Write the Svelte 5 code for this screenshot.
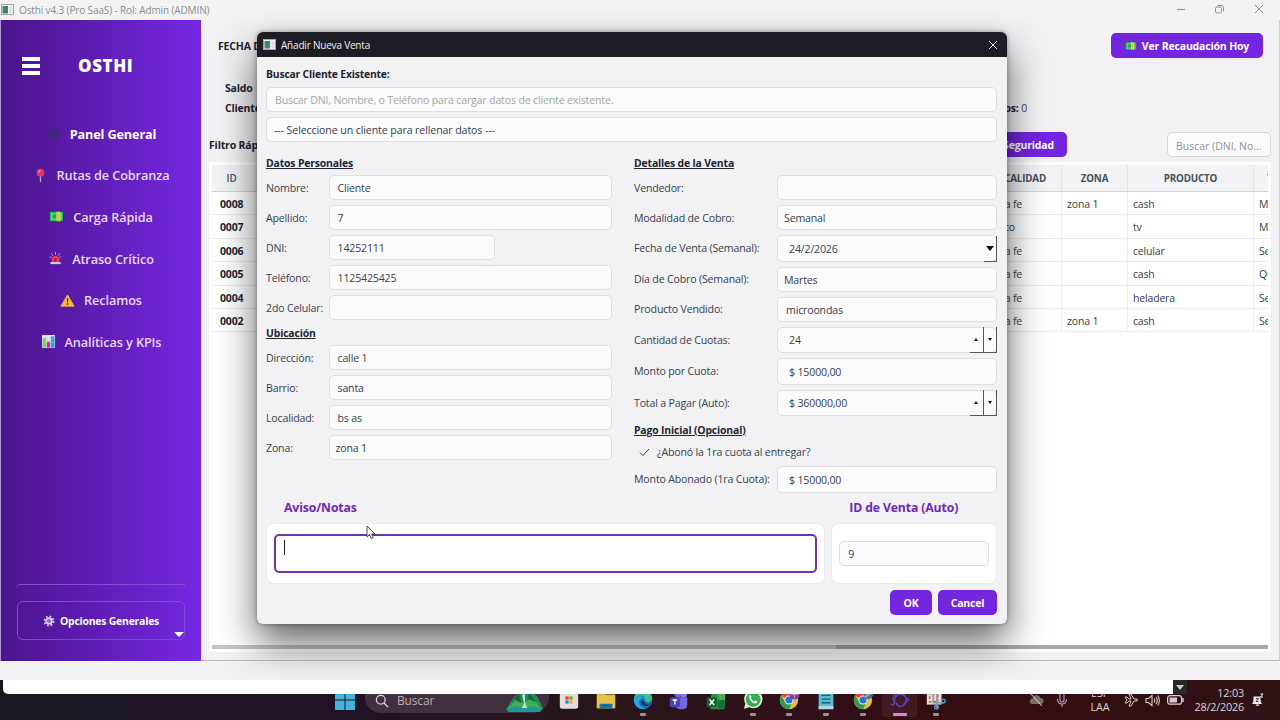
<script>
    const menu = [
        { icon: 'people', name: 'Panel General', active: true },
        { icon: 'pin', name: 'Rutas de Cobranza' },
        { icon: 'money', name: 'Carga Rápida' },
        { icon: 'siren', name: 'Atraso Crítico' },
        { icon: 'warn', name: 'Reclamos' },
        { icon: 'chart', name: 'Analíticas y KPIs' }
    ];

    const rows = [
        ['0008', 'a fe', 'zona 1', 'cash', 'Me'],
        ['0007', 'co', '', 'tv', 'Me'],
        ['0006', 'a fe', '', 'celular', 'Se'],
        ['0005', 'a fe', '', 'cash', 'Qu'],
        ['0004', 'a fe', '', 'heladera', 'Se'],
        ['0002', 'a fe', 'zona 1', 'cash', 'Se']
    ];

    const personal = [
        { label: 'Nombre:', value: 'Cliente' },
        { label: 'Apellido:', value: '7' },
        { label: 'DNI:', value: '14252111', type: 'short' },
        { label: 'Teléfono:', value: '1125425425' },
        { label: '2do Celular:', value: '' }
    ];

    const address = [
        { label: 'Dirección:', value: 'calle 1' },
        { label: 'Barrio:', value: 'santa' },
        { label: 'Localidad:', value: 'bs as' },
        { label: 'Zona:', value: 'zona 1', type: 'combo' }
    ];

    const sale = [
        { label: 'Vendedor:', value: '' },
        { label: 'Modalidad de Cobro:', value: 'Semanal', type: 'combo' },
        { label: 'Fecha de Venta (Semanal):', value: '24/2/2026', type: 'date' },
        { label: 'Día de Cobro (Semanal):', value: 'Martes', type: 'combo' },
        { label: 'Producto Vendido:', value: 'microondas' },
        { label: 'Cantidad de Cuotas:', value: '24', type: 'spin' },
        { label: 'Monto por Cuota:', value: '$ 15000,00', type: 'money' },
        { label: 'Total a Pagar (Auto):', value: '$ 360000,00', type: 'spin' }
    ];

    const apps = ['store', 'folder', 'edge', 'teams', 'excel', 'whatsapp', 'chrome', 'notes', 'chrome2', 'osthi', 'snip'];
    const running = ['edge', 'whatsapp', 'chrome', 'notes', 'chrome2', 'snip'];
</script>

{#snippet appIcon()}
    <svg class="app-icon" width="13" height="11" viewBox="0 0 13 11">
        <rect x=".5" y=".5" width="12" height="10" fill="#f4f7f6" stroke="#9da9a8" />
        <rect x="1.5" y="2" width="5.5" height="7.5" fill="#3c8474" />
        <rect x="8" y="2" width="3.5" height="7.5" fill="#d9e9e5" />
    </svg>
{/snippet}

{#snippet emoji(name)}
    <svg class="emoji" width="16" height="16" viewBox="0 0 16 16">
        {#if name == 'people'}
            <g fill="#3d2a78">
                <circle cx="5" cy="5.3" r="2.2" /><circle cx="11" cy="5.3" r="2.2" />
                <path d="M2 13V10q0-2 3-2t3 2q0-2 3-2t3 2v3H9v-2H7v2Z" />
            </g>
        {:else if name == 'pin'}
            <path d="M7.3 8h1.4v6.5l-.7 1-.7-1Z" fill="#b3a5cc" />
            <circle cx="8" cy="5" r="4.1" fill="#e5326a" />
            <circle cx="6.7" cy="3.7" r="1.3" fill="#f67697" />
        {:else if name == 'money'}
            <rect x="1" y="3" width="14" height="10" fill="#25b34d" />
            <rect x="2.2" y="4.2" width="11.6" height="7.6" fill="#5cd873" />
            <circle cx="6" cy="8" r="2.4" fill="#25a547" />
            <rect x="8" y="3" width="4" height="10" fill="#f6d74c" />
            <rect x="9.2" y="3" width="1" height="10" fill="#c8a72c" />
        {:else if name == 'siren'}
            <path d="M8 1v3M3.5 2.5 5.2 5M12.5 2.5 10.8 5M1.8 6l2 1M14.2 6l-2 1" stroke="#e8a0b5" stroke-width="1" />
            <path d="M4 12V9q0-3.8 4-3.8T12 9v3Z" fill="#f0375b" />
            <path d="M7 8h2v4H7Z" fill="#a91b50" />
            <path d="M2.5 14v-2.2h11V14Z" fill="#d7c6dc" />
        {:else if name == 'warn'}
            <path d="M8 2 15 14H1Z" fill="#f5b941" stroke="#f5b941" stroke-linejoin="round" />
            <path d="M7.2 5.5h1.6L8.5 10h-1ZM7.2 11h1.6v1.6H7.2Z" fill="#45321f" />
        {:else if name == 'chart'}
            <rect x="1" y="1" width="14" height="14" rx="1" fill="#e5e8f0" />
            <rect x="1.5" y="4" width="4" height="10.5" fill="#7cd36e" />
            <rect x="6.2" y="8" width="3.5" height="6.5" fill="#d42d68" />
            <rect x="10.4" y="2.5" width="4.1" height="12" fill="#349ce0" />
            <path d="M1 5h14M1 9h14" stroke="#c5cbe0" stroke-width=".5" />
        {:else if name == 'gear'}
            <circle cx="8" cy="8" r="3.7" fill="none" stroke="#d8cfec" stroke-width="2.8" />
            <circle cx="8" cy="8" r="6.2" fill="none" stroke="#d8cfec" stroke-width="2.2" stroke-dasharray="2.43 2.43" />
            <circle cx="8" cy="8" r="1.2" fill="#a996cd" />
        {/if}
    </svg>
{/snippet}

{#snippet task(name)}
    <svg width="24" height="24" viewBox="0 0 24 24">
        {#if name == 'store'}
            <path d="M8 5V2h8v3" fill="none" stroke="#4aa4dc" stroke-width="2" />
            <rect x="2" y="3" width="20" height="18.5" rx="2.5" fill="#e3dddd" />
            <path d="M8 8h3.6v3.6H8Z" fill="#df4930" /><path d="M12.4 8H16v3.6h-3.6Z" fill="#77a72d" />
            <path d="M8 12.4h3.6V16H8Z" fill="#2c88d2" /><path d="M12.4 12.4H16V16h-3.6Z" fill="#e8ad29" />
        {:else if name == 'folder'}
            <path d="M2 3h8l2 3h10v15H2Z" fill="#dcb43c" />
            <path d="M2 7h20v14H2Z" fill="#e4c14a" />
            <path d="M5 21v-4q0-1 1-1h12q1 0 1 1v4Z" fill="#1c75b8" /><path d="M8 18h8" stroke="#124d83" stroke-width="1.3" />
        {:else if name == 'edge'}
            <circle cx="12" cy="12" r="10" fill="#1570bd" />
            <path d="M2 12C2 5 7 2 12 2c6 0 10 4 10 8 0 3-3 5-6 4-3 0-2-2-2-4-1-4-9-4-12 2Z" fill="#3fbe8e" />
            <path d="M2 12c3-6 11-5 12-1-4-2-7 1-6 5 1 3 5 5 8 5-8 3-14-3-14-9Z" fill="#2aa5d5" />
            <path d="M10 15c0-2 2-3 3-2s0 4 7 4c-2 2-9 3-10-2Z" fill="#172f4e" />
        {:else if name == 'teams'}
            <circle cx="17" cy="6" r="3.5" fill="#8181ee" /><circle cx="11" cy="5" r="4" fill="#6d71e2" />
            <path d="M8 9h13v8q0 5-5 5h-3q-5 0-5-5Z" fill="#6f66e2" />
            <rect x="2" y="9" width="11" height="11" rx="2" fill="#4448ad" />
            <path d="M5 12h5M7.5 12v5" stroke="#fff" stroke-width="1.4" />
        {:else if name == 'excel'}
            <path d="M8 2h13v20H6V10Z" fill="#2b8e43" /><path d="M14 2h8v10h-8Z" fill="#4eae46" />
            <path d="M14 12h8v9h-8Z" fill="#187038" />
            <rect x="2" y="9" width="11" height="11" rx="2" fill="#126535" />
            <path d="m5 11.5 5 6m0-6-5 6" stroke="#fff" stroke-width="1.5" />
        {:else if name == 'whatsapp'}
            <path d="M2 21.5 3.7 16A10 10 0 1 1 8 20Z" fill="#dceadd" />
            <circle cx="12.2" cy="11.4" r="8" fill="#32ad50" />
            <path d="M8 7q1-1.4 2 .8l.5 1-.9 1.2q1.2 2.5 3.7 3.5l1.2-1.2 2.3 1.2q0 2-2.3 2.2C10.5 15.4 7 10.5 8 7Z" fill="#f4f7f3" />
        {:else if name == 'chrome' || name == 'chrome2'}
            <circle cx="12" cy="12" r="10" fill="#e5c037" />
            <path d="M12 12 3.3 7A10 10 0 0 1 21 7H12Z" fill="#dd4536" />
            <path d="M3.3 7A10 10 0 0 0 12 22l4-8-8 0Z" fill="#37994f" />
            <circle cx="12" cy="12" r="5" fill="#f0eeee" /><circle cx="12" cy="12" r="3.9" fill="#2c70d8" />
            {#if name == 'chrome'}
                <circle cx="18" cy="6" r="5.5" fill="#7c3f99" /><path d="M14 6h8M18 2v8" stroke="#c18ad2" />
            {:else}
                <circle cx="18" cy="6" r="5" fill="#526e79" /><path d="m14 9 8-6" stroke="#9eb8bc" stroke-width="2" />
            {/if}
        {:else if name == 'notes'}
            <path d="M4 2h16v20H4Z" fill="#56bfd1" /><path d="M4 18.5h16V22H4Z" fill="#b5d7dc" />
            <path d="M7 7h10M7 11h10M7 15h10" stroke="#176375" stroke-width="1.5" />
        {:else if name == 'osthi'}
            <path d="M2 17c5 1 3-3 4-6 1-4 5-6 8-5 6 1 4 6 8 5M8 15c1 5 6 5 9 2 2-2 1-4 4-4M8 5c-4 2-5 6-1 10M16 6c4 3 4 7 0 11" fill="none" stroke="#5448c4" stroke-width="1.6" />
        {:else if name == 'snip'}
            <rect x="2" y="2" width="16" height="15" fill="#e7dddd" />
            <path d="M5 5h9v9H5Z" fill="none" stroke="#c5523c" stroke-width="1.6" stroke-dasharray="3 2" />
            <path d="M9 2v13h11M13 2v19" fill="none" stroke="#8f9ca2" stroke-width="1.8" />
            <circle cx="20" cy="13" r="2" fill="none" stroke="#48a6d5" stroke-width="1.5" />
            <circle cx="12.5" cy="20" r="2" fill="none" stroke="#48a6d5" stroke-width="1.5" />
        {/if}
    </svg>
{/snippet}

{#snippet formRow(f)}
    <div class="row">
        <span class="label">{f.label}</span>
        <div class="field {f.type}">
            <span>{f.value}</span>
            {#if f.type == 'date'}
                <i class="step"><b class="down"></b></i>
            {:else if f.type == 'spin'}
                <i class="step"><b class="up small"></b></i><i class="step"><b class="down small"></b></i>
            {/if}
        </div>
    </div>
{/snippet}

<div class="desktop">
    <header class="titlebar">
        {@render appIcon()}
        <span>Osthi v4.3 (Pro SaaS) - Rol: Admin (ADMIN)</span>
        <svg class="controls" width="90" height="12" viewBox="0 0 90 12" fill="none" stroke="#8e8e90">
            <path d="M0 5.5h8" />
            <rect x="38.5" y="3" width="6" height="6" rx="1.5" /><path d="M40.5 1.5h4q2 0 2 2v4" />
            <path d="m78 1 8 8m0-8-8 8" />
        </svg>
    </header>

    <div class="main">
        <nav>
            <div class="brand">
                <div class="burger"><i></i><i></i><i></i></div>
                <h1>OSTHI</h1>
            </div>
            {#each menu as item}
                <div class="item" class:active={item.active}>{@render emoji(item.icon)}<span>{item.name}</span></div>
            {/each}
            <div class="rule"></div>
            <div class="options">
                {@render emoji('gear')}<span>Opciones Generales</span>
                <b class="down"></b>
            </div>
        </nav>

        <section class="content">
            <div class="top">
                <b>FECHA D</b>
                <div class="btn collect">{@render emoji('money')}<span>Ver Recaudación Hoy</span></div>
            </div>
            <div class="stats">
                <b>Saldo</b>
                <b>Clientes:</b>
                <span class="late"><b>os:</b> 0</span>
            </div>
            <div class="filter">
                <b>Filtro Rápido:</b>
                <div class="btn backup">Seguridad</div>
                <div class="search">Buscar (DNI, No...</div>
            </div>
            <div class="panel">
                <div class="grid head"><span>ID</span><span>CALIDAD</span><span>ZONA</span><span>PRODUCTO</span><span class="last">T</span></div>
                {#each rows as r}
                    <div class="grid">
                        {#each r as cell}<span>{cell}</span>{/each}
                    </div>
                {/each}
                <div class="scroll"><i></i></div>
            </div>
        </section>
    </div>
    <div class="status"></div>

    <footer>
        <div class="apps">
            <svg class="start" width="20" height="20" viewBox="0 0 20 20" fill="#45b2d8">
                <path d="M0 0h9.5v9.5H0ZM10.5 0H20v9.5h-9.5ZM0 10.5h9.5V20H0ZM10.5 10.5H20V20h-9.5Z" />
            </svg>
            <div class="find">
                <svg width="14" height="14" viewBox="0 0 14 14" fill="none" stroke="#ddd4da" stroke-width="1.3"><circle cx="5.8" cy="5.8" r="4.4" /><path d="m9 9 4 4" /></svg>
                <span>Buscar</span>
                <svg class="gem" width="39" height="22" viewBox="0 0 39 22">
                    <path d="M1 19 9 7l6-5h10l7 4 6 12-3 4H3Z" fill="#1f8c55" />
                    <path d="m3 18 8-8 8 3 8-6 10 12-3 3H4Z" fill="#44ad50" />
                    <path d="m2 19 8-3 8 2 10-2 9 3-3 3H4Z" fill="#19999a" />
                    <path d="m17 5 2 8-2 5h5l-2-6V4Z" fill="#b9e4dc" />
                    <path d="m9 9 5-6 2 10ZM24 3l7 9-8-3Z" fill="#146440" />
                </svg>
            </div>
            {#each apps as a}
                <div class="task" class:current={a == 'osthi'}>
                    {@render task(a)}
                    <i class:on={running.includes(a)}></i>
                </div>
            {/each}
        </div>
        <div class="tray">
            <svg width="15" height="14" viewBox="0 0 15 14"><path d="M3 11q-3-1-2-4 1-2 3-2 1-3 4-3 3 1 3.5 3 3 0 3 3 0 3-3 3Z" fill="#796b6b" /><path d="m2 1 11 12" stroke="#d0c6c6" stroke-width="1.1" /></svg>
            <svg width="12" height="16" viewBox="0 0 12 16" fill="none" stroke="#bd8dbb" stroke-width="1.2"><rect x="4" y="1" width="4" height="9" rx="2" /><path d="M1.5 7q0 5 4.5 5t4.5-5M6 12v3" /></svg>
            <div class="lang">ESP<br />LAA</div>
            <svg width="14" height="14" viewBox="0 0 14 14" fill="none" stroke="#d7cccc"><path d="m1 4 2 3-2 3h2l2-2h2l-2 5h2l3-5h3q1-1 0-2h-3L7 1H5l2 5H5L3 4Z" /></svg>
            <svg width="15" height="13" viewBox="0 0 15 13" fill="none" stroke="#d7cccc" stroke-width="1.1"><path d="M1 4.5h2.5L7 1.5v10l-3.5-3H1ZM9 4.5q1.5 2 0 4M11 3q2.5 3.5 0 7M12.8 1.5q3 5 0 10" /></svg>
            <svg width="17" height="10" viewBox="0 0 17 10"><rect x=".6" y=".6" width="14" height="8.6" rx="2.5" fill="none" stroke="#d7cccc" stroke-width="1.2" /><rect x="2.5" y="2.5" width="7.5" height="5" fill="#d7cccc" /><path d="M16 3v4" stroke="#d7cccc" stroke-width="1.5" /></svg>
            <div class="clock">12:03<br />28/2/2026</div>
            <svg width="13" height="14" viewBox="0 0 13 14"><path d="M1 11q1.5-1.500 1.500-5V3.500h7V6q0 3.500 1.500 5ZM4.500 11.500h4Q6.500 14.500 4.500 11.500Z" fill="#efe7e7" /><path d="M5 5.500h2.500L5 8.500h2.500M9.500 1H12L9.500 4H12" fill="none" stroke="#5a3838" stroke-width="1" /><path d="M9.500 1H12L9.500 4H12" fill="none" stroke="#efe7e7" /></svg>
        </div>
    </footer>

    <div class="dialog">
        <div class="caption">
            {@render appIcon()}
            <span>Añadir Nueva Venta</span>
            <svg width="10" height="10" viewBox="0 0 10 10" stroke="#e8e8ea"><path d="m1 1 8 8m0-8-8 8" /></svg>
        </div>
        <div class="body">
            <b class="lookup">Buscar Cliente Existente:</b>
            <div class="field hint"><span>Buscar DNI, Nombre, o Teléfono para cargar datos de cliente existente.</span></div>
            <div class="field combo pick"><span>--- Seleccione un cliente para rellenar datos ---</span></div>
            <div class="cols">
                <div class="left">
                    <h3><u>Datos Personales</u></h3>
                    {#each personal as f}{@render formRow(f)}{/each}
                    <h3 class="tight"><u>Ubicación</u></h3>
                    {#each address as f}{@render formRow(f)}{/each}
                </div>
                <div class="right">
                    <h3><u>Detalles de la Venta</u></h3>
                    {#each sale as f}{@render formRow(f)}{/each}
                    <h3 class="pay"><u>Pago Inicial (Opcional)</u></h3>
                    <div class="check">
                        <svg width="11" height="9" viewBox="0 0 11 9" fill="none" stroke="#333"><path d="m1 4.5 3 3L10 1" /></svg>
                        <span>¿Abonó la 1ra cuota al entregar?</span>
                    </div>
                    {@render formRow({ label: 'Monto Abonado (1ra Cuota):', value: '$ 15000,00', type: 'money' })}
                </div>
            </div>
            <div class="groups">
                <div class="group">
                    <h2>Aviso/Notas</h2>
                    <div class="card"><div class="notes"><i></i></div></div>
                </div>
                <div class="group id">
                    <h2>ID de Venta (Auto)</h2>
                    <div class="card"><div class="field"><span>9</span></div></div>
                </div>
            </div>
            <div class="actions">
                <div class="btn">OK</div>
                <div class="btn">Cancel</div>
            </div>
        </div>
    </div>

    <div class="strip"></div>
    <div class="corner"><b class="down"></b></div>
    <svg class="cursor" width="10" height="15" viewBox="0 0 10 15"><path d="M1 1v11l2.6-2.4L5.2 13.5l2-.9L5.7 9H9Z" fill="#fff" stroke="#3a3a42" stroke-width=".9" /></svg>
</div>

<style>
    :global(body){
        margin: 0;
        overflow: hidden;
        background: #17131c;
    }
    .desktop{
        position: relative;
        width: 1280px;
        height: 720px;
        display: flex;
        flex-direction: column;
        overflow: hidden;
        box-sizing: border-box;
        font-family: "Open Sans", "Noto Sans", sans-serif;
        font-size: 10.6px;
        letter-spacing: -.17px;
        line-height: 14px;
        color: #36404a;
        white-space: nowrap;
    }
    .desktop *{
        box-sizing: border-box;
    }
    h1, h2, h3{
        margin: 0;
    }
    b{
        color: #1c2530;
    }
    svg{
        flex: none;
        display: block;
    }

    .titlebar{
        height: 20px;
        flex: none;
        display: flex;
        align-items: center;
        gap: 5px;
        padding: 0 13px 1px 1px;
        background: #f3f3f3;
        color: #8c8c8e;
        font-size: 10px;
        letter-spacing: -.13px;
    }
    .controls{
        margin-left: auto;
    }

    .main{
        height: 641px;
        flex: none;
        display: flex;
        border-left: 1px solid #a99bd0;
        border-right: 1px solid #cfcfd4;
        background: #f2f2f5;
    }
    nav{
        width: 200px;
        flex: none;
        display: flex;
        flex-direction: column;
        background: linear-gradient(90deg, #4a148c, #7627e3);
        color: #e9d9fa;
    }
    .brand{
        height: 93px;
        display: flex;
        align-items: center;
        padding: 0 0 2px 21px;
        gap: 38px;
    }
    .burger{
        width: 18px;
        display: flex;
        flex-direction: column;
        gap: 3px;
        padding-top: 1px;
    }
    .burger i{
        height: 4px;
        background: #fff;
    }
    h1{
        font-size: 17px;
        font-weight: 800;
        letter-spacing: .6px;
        color: #fff;
    }
    .item{
        height: 41.6px;
        display: flex;
        align-items: center;
        justify-content: center;
        gap: 9px;
        font-size: 12.7px;
        font-weight: 600;
        letter-spacing: -.1px;
    }
    .item.active{
        color: #fff;
        font-weight: 700;
        letter-spacing: -.15px;
    }
    .item .emoji{
        width: 15px;
        height: 15px;
    }
    .rule{
        height: 8px;
        margin: auto 15px 9px;
        border-top: 1px solid #8350d2;
        border-radius: 8px;
    }
    .options{
        position: relative;
        height: 39px;
        margin: 0 16px 21px 16px;
        border: 1px solid #8048d7;
        border-radius: 6px;
        display: flex;
        align-items: center;
        justify-content: center;
        gap: 5px;
        padding-top: 1px;
        color: #fff;
        font-weight: 700;
        font-size: 10.4px;
        letter-spacing: -.2px;
    }
    .options .emoji{
        width: 12px;
        height: 12px;
    }
    .down, .up{
        width: 0;
        height: 0;
        border: 4px solid transparent;
        border-top: 5px solid #111;
        border-bottom: 0;
    }
    .small{
        border-width: 2px;
        border-top-width: 3px;
        border-bottom-width: 0;
    }
    .up{
        border-top: 0;
        border-bottom: 3px solid #111;
    }
    .options .down{
        position: absolute;
        right: 0;
        bottom: 2px;
        border-width: 5px 5px 0;
        border-top-color: #fff;
    }

    .content{
        flex: 1;
        min-width: 0;
        display: flex;
        flex-direction: column;
        padding: 0 8px 0 8px;
        border-bottom: 1px solid #b9b9bd;
        font-size: 10.5px;
    }
    .top{
        height: 51px;
        display: flex;
        align-items: center;
        justify-content: space-between;
        padding: 0 9px;
    }
    .btn{
        height: 25px;
        display: flex;
        align-items: center;
        justify-content: center;
        gap: 5px;
        padding-top: 1px;
        border-radius: 5px;
        background: #7425e0;
        color: #fff;
        font-size: 10.5px;
        font-weight: 700;
    }
    .collect{
        width: 152px;
        margin-right: -1px;
    }
    .collect .emoji{
        width: 12px;
        height: 12px;
    }
    .stats{
        height: 60px;
        display: grid;
        grid-template-columns: 600px 1fr;
        grid-template-rows: 20px 20px;
        align-items: center;
        padding: 7px 0 0 16px;
    }
    .stats > b{
        grid-column: 1;
    }
    .late{
        grid-column: 2;
        grid-row: 2;
        justify-self: end;
        margin-right: 244px;
    }
    .filter{
        height: 27px;
        display: flex;
        align-items: center;
    }
    .backup{
        width: 100px;
        margin-left: auto;
        justify-content: flex-end;
        padding-right: 13px;
    }
    .search{
        width: 104px;
        height: 25px;
        margin-left: 100px;
        border: 1px solid #d5d7dc;
        border-radius: 5px;
        background: #fbfbfd;
        color: #8f9298;
        padding: 6px 8px;
        letter-spacing: 0;
    }
    .panel{
        height: 490px;
        flex: none;
        margin-top: 4px;
        padding: 3px 3px;
        background: #fff;
        display: flex;
        flex-direction: column;
        overflow: hidden;
    }
    .grid{
        height: 23.4px;
        flex: none;
        display: grid;
        grid-template-columns: 60px 790px 66px 126px 1fr;
        overflow: hidden;
    }
    .grid span{
        padding: 5px 5px;
        border-right: 1px solid #eeeef1;
        border-bottom: 1px solid #ececf0;
        min-width: 0;
        overflow: hidden;
    }
    .grid span:first-child{
        padding-left: 8px;
        color: #1c2530;
        font-weight: 700;
    }
    .grid span:nth-child(2){
        text-align: right;
        padding-right: 39px;
    }
    .grid:nth-child(3) span:nth-child(2){
        padding-right: 46px;
    }
    .grid span:last-child{
        border-right: 0;
        padding-right: 0;
    }
    .head{
        height: 27px;
        background: #f2f3f6;
        font-size: 9.8px;
        font-weight: 700;
        color: #46505a;
    }
    .head span{
        padding: 7px 0;
        text-align: center;
        border-right-color: #e2e4e8;
        border-bottom: 1px solid #d2d4da;
    }
    .head span:first-child{
        padding: 7px 20px 6px 0;
        font-weight: 600;
        color: #46505a;
    }
    .head span:nth-child(2){
        padding: 7px 15px 0 0;
    }
    .head span.last{
        text-align: left;
        padding-left: 13px;
    }
    .scroll{
        height: 4px;
        margin-top: auto;
        background: #c3c3ca;
    }
    .scroll i{
        display: block;
        width: 432px;
        height: 4px;
        margin-left: 624px;
        background: #a7a7a9;
    }
    .status{
        height: 19px;
        flex: none;
        background: #f2f2f4;
    }

    footer{
        height: 40px;
        flex: none;
        display: flex;
        justify-content: space-between;
        padding: 0 16px 0 335px;
        background: linear-gradient(90deg, #1a161f, #1e1226 24%, #261320 32%, #29161b 47%, #301018 62%, #330c10 78%, #2f1216);
        color: #ddd3d5;
        font-size: 10.8px;
    }
    .apps, .tray{
        display: flex;
        align-items: center;
    }
    .find{
        width: 184px;
        height: 33px;
        align-self: flex-start;
        margin: 0 2px 0 10px;
        padding: 8px 5px 0 10px;
        display: flex;
        align-items: center;
        gap: 8px;
        border-radius: 0 0 16px 16px;
        background: #43303f;
        font-size: 12px;
        color: #b9acb6;
    }
    .gem{
        margin-left: auto;
    }
    .task{
        width: 34.7px;
        height: 40px;
        margin: 0 1px;
        padding-top: 8px;
        display: flex;
        flex-direction: column;
        align-items: center;
        border-radius: 4px;
    }
    .task svg{
        width: 22px;
    }
    .task i{
        width: 6px;
        height: 3px;
        margin-top: 1px;
        border-radius: 1px;
    }
    .task .on{
        background: #a58e90;
    }
    .current{
        background: #431a21;
        height: 37px;
        align-self: flex-start;
    }
    .task.current i{
        width: 14px;
        background: #d18ad0;
    }
    .tray > svg{
        margin-right: 7px;
    }
    .tray > svg:first-child{
        margin-right: 12px;
    }
    .tray > svg:last-child{
        margin-right: 0;
    }
    .lang{
        width: 28px;
        margin: 0 10px 0 11px;
        text-align: center;
    }
    .clock{
        width: 53px;
        margin-right: 7px;
        text-align: right;
    }

    .dialog{
        position: absolute;
        left: 257px;
        top: 32px;
        width: 750px;
        height: 592px;
        border-radius: 6px;
        background: #f2f2f5;
        box-shadow: 0 18px 38px rgba(0,0,0,.62), 0 0 5px rgba(0,0,0,.35);
    }
    .caption{
        height: 25px;
        display: flex;
        align-items: center;
        gap: 5px;
        padding: 0 9px 0 6px;
        border-radius: 6px 6px 0 0;
        background: #1e1c24;
        color: #eeeef0;
        font-size: 10px;
        letter-spacing: -.2px;
    }
    .caption svg:last-child{
        margin-left: auto;
    }
    .body{
        padding: 0 10px 0 9px;
    }
    .lookup{
        display: block;
        height: 30px;
        padding-top: 10px;
        font-size: 10.4px;
        letter-spacing: -.2px;
    }
    .field{
        height: 25px;
        display: flex;
        align-items: center;
        padding: 1px 8px 0;
        border: 1px solid #dcdee3;
        border-radius: 5px;
        background: #fbfbfd;
    }
    .field > span{
        flex: 1;
    }
    .field.hint{
        color: #a2a6a6;
        margin-bottom: 5px;
    }
    .field.combo{
        padding-left: 6px;
    }
    .field.pick{
        padding: 0 7px;
        letter-spacing: -.1px;
    }
    .cols{
        display: flex;
        gap: 22px;
        height: 351px;
        padding-top: 8px;
    }
    .left{
        width: 346px;
    }
    .right{
        width: 363px;
    }
    h3{
        height: 25px;
        padding-top: 6px;
        font-size: 10.4px;
    	letter-spacing: -.15px;
        color: #1c2530;
    }
    h3.tight{
        margin-top: -5px;
    }
    h3.pay{
        height: 24px;
        margin-top: -3px;
        padding-top: 5px;
    }
    .row{
        display: flex;
        align-items: center;
        margin-bottom: 5px;
    }
    .row .label{
        width: 62.5px;
    }
    .right .label{
        width: 143px;
    }
    .row .field{
        flex: 1;
    }
    .row .short{
        flex: none;
        width: 166px;
    }
    .row .date, .row .spin, .row .money{
        height: 26.5px;
        padding: 1px 0 0 11px;
    }
    .step{
        height: 26px;
        width: 13.5px;
        display: flex;
        align-items: center;
        justify-content: center;
        border-right: 1px solid #555;
        border-bottom: 1px solid #555;
    }
    .step:last-child{
        margin-right: -1px;
    }
    .check{
        height: 24px;
        display: flex;
        align-items: center;
        gap: 7px;
        padding: 0 0 4px 5px;
    }
    .groups{
        display: flex;
        gap: 6px;
    }
    .group{
        width: 560px;
    }
    .group.id{
        width: 166px;
    }
    h2{
        height: 30px;
        padding: 8px 0 0 18px;
        font-size: 12.2px;
        letter-spacing: -.1px;
        color: #6d28b8;
    }
    .card{
        height: 61px;
        padding: 10px 7px;
        border: 1px solid #ebebef;
        border-radius: 8px;
        background: #fff;
    }
    .notes{
        height: 39px;
        border: 2px solid #7033ac;
        border-radius: 5px;
        padding: 4px 8px;
    }
    .notes i{
        display: block;
        width: 1px;
        height: 15px;
        background: #222;
    }
    .id .card{
        padding: 17px 7px;
    }
    .actions{
        display: flex;
        justify-content: flex-end;
        gap: 6px;
        margin-top: 6px;
    }
    .actions .btn{
        width: 42px;
    }
    .actions .btn + .btn{
        width: 59px;
    }

    .strip{
        position: absolute;
        left: 3px;
        top: 680px;
        width: 1170px;
        height: 14px;
        border-bottom-left-radius: 5px;
        background: #fff;
    }
    .corner{
        position: absolute;
        left: 1173px;
        top: 680px;
        width: 14px;
        height: 14px;
        background: #252b29;
        display: flex;
        align-items: center;
        justify-content: center;
    }
    .corner .down{
        border-top-color: #ccc;
    }
    .cursor{
        position: absolute;
        left: 366px;
        top: 525px;
    }
</style>
